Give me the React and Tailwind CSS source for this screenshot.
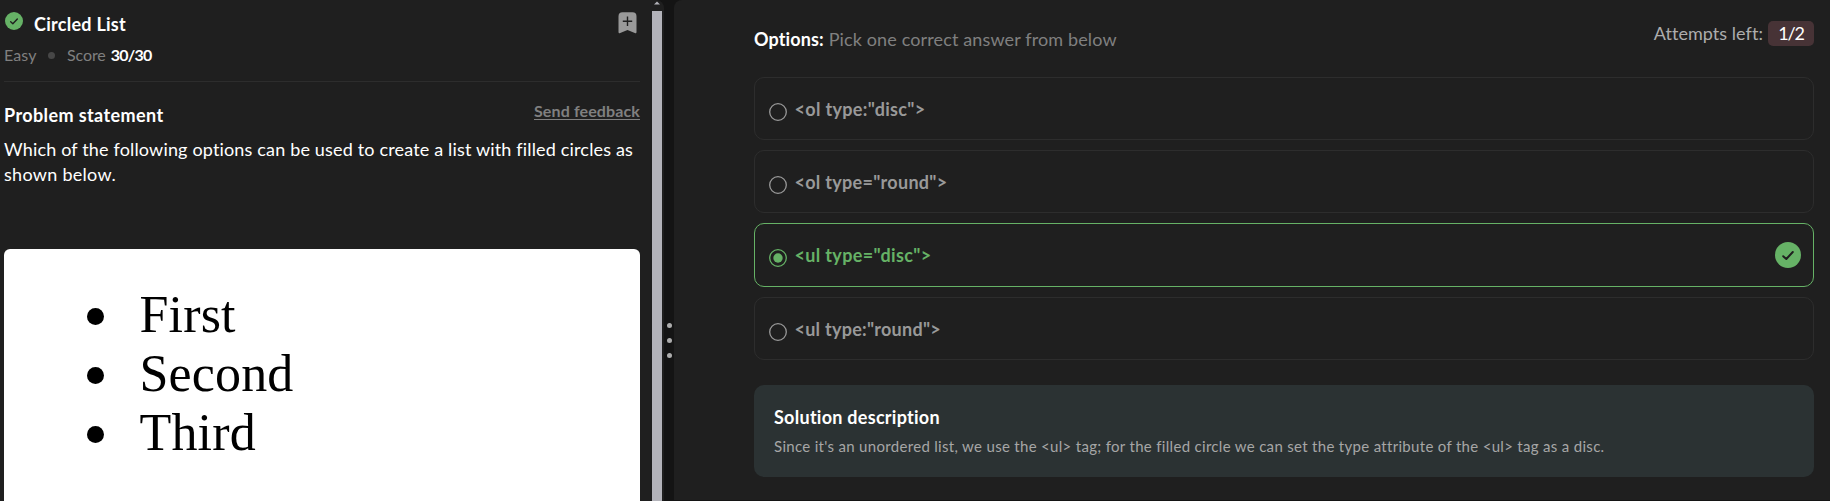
function CheckBadge({ className }) {
  return (
    <svg viewBox="0 0 26 26" className={className} fill="none">
      <circle cx="13" cy="13" r="13" fill="#66b266" />
      <path d="M8.2 14.2 L11.3 17 L17.8 10" stroke="#1f1f1f" strokeWidth="2" strokeLinecap="round" strokeLinejoin="round" />
    </svg>
  );
}

function BookmarkPlus() {
  return (
    <svg viewBox="0 0 19 22" className="h-[22px] w-[19px]">
      <path d="M4.5 0.3 H14.5 Q18.5 0.3 18.5 4.3 V20 Q18.5 21.8 16.8 21.1 L9.5 18 L2.2 21.1 Q0.5 21.8 0.5 20 V4.3 Q0.5 0.3 4.5 0.3 Z" fill="#999999" />
      <path d="M9.5 4.5 V14 M4.8 9.3 H14.2" stroke="#1f1f1f" strokeWidth="1.4" />
    </svg>
  );
}

function Radio({ selected }) {
  return (
    <svg viewBox="0 0 18 18" className={selected ? "size-[18px] text-[#66b266]" : "size-[18px] text-[#999999]"}>
      <circle cx="9" cy="9" r="8.3" fill="none" stroke="currentColor" strokeWidth="1.3" />
      {selected && <circle cx="9" cy="9" r="4.7" fill="currentColor" />}
    </svg>
  );
}

const options = [
  { text: '<ol type:"disc">', tracking: "tracking-[0.32px]" },
  { text: '<ol type="round">', tracking: "tracking-[0.289px]" },
  { text: '<ul type="disc">', tracking: "tracking-[0.345px]", selected: true },
  { text: '<ul type:"round">', tracking: "tracking-[0.259px]" },
];

function Option({ text, tracking, selected }) {
  return (
    <div
      className={
        selected
          ? "flex h-16 items-center rounded-[10px] border border-[#66b266] pr-[12px] pl-[13.5px] text-[#66b266]"
          : "flex h-[63px] items-center rounded-[10px] border border-[#2d2d2d] pr-[12px] pl-[13.5px] text-[#999999]"
      }
    >
      <span className="mt-[6px]">
        <Radio selected={selected} />
      </span>
      <span className={"ml-[8px] text-[18px] leading-6 font-bold " + tracking}>{text}</span>
      {selected && <CheckBadge className="ml-auto size-[26px]" />}
    </div>
  );
}

function ProblemPanel() {
  return (
    <section className="flex w-[664px] shrink-0 rounded-tr-lg bg-[#1f1f1f]">
      <div className="flex w-[640px] flex-col pl-1">
        <header className="flex h-[82px] justify-between border-b border-[#2d2d2d]">
          <div>
            <div className="flex pt-[12px]">
              <CheckBadge className="ml-[1px] size-[18px]" />
              <h1 className="ml-[11px] text-[18px] leading-6 font-bold tracking-[0.264px]">Circled List</h1>
            </div>
            <div className="mt-[7px] flex items-center text-[16px] leading-6 text-[#808080]">
              <span className="tracking-[0.1px]">Easy</span>
              <span className="mr-3 ml-[11.5px] size-[7px] rounded-full bg-[#474747]" />
              <span className="tracking-[-0.1px]">Score</span>
              <b className="ml-[5px] tracking-[-0.716px] text-white">30/30</b>
            </div>
          </div>
          <div className="pt-[12px] pr-[3px]">
            <BookmarkPlus />
          </div>
        </header>
        <div className="mt-[17px] flex justify-between whitespace-nowrap">
          <h2 className="mt-[4px] text-[18px] leading-6 font-bold tracking-[0.393px]">Problem statement</h2>
          <a className="text-[16px] leading-6 font-bold tracking-[0.12px] text-[#808080] underline underline-offset-2">Send feedback</a>
        </div>
        <p className="mt-[10px] text-[18px] leading-[25px] tracking-[0.164px] whitespace-nowrap">
          Which of the following options can be used to create a list with filled circles as
          <br />
          <span className="tracking-[0.283px]">shown below.</span>
        </p>
        <div className="mt-[62px] flex-1 rounded-t-md bg-white pt-[36px] pl-[82.5px] font-['Liberation_Serif',serif] text-[52px] leading-[59px] tracking-[0.15px] text-black">
          <ul>
            {["First", "Second", "Third"].map((item) => (
              <li key={item} className="flex items-center">
                <span className="mt-[3px] mr-[36px] size-[17px] rounded-full bg-black" />
                {item}
              </li>
            ))}
          </ul>
        </div>
      </div>
      <div className="ml-[12px] flex w-[10px] flex-col items-center">
        <svg viewBox="0 0 6 4" className="mt-[1px] mb-[6px] h-1 w-1.5 shrink-0" fill="#b3b3ba">
          <path d="M3 0.5 L6 3.5 H0 Z" />
        </svg>
        <div className="w-full flex-1 bg-[#b3b3ba]" />
      </div>
    </section>
  );
}

export default function App() {
  return (
    <main className="flex h-[501px] w-[1830px] overflow-hidden bg-[#141414] font-['Lato',sans-serif] text-white">
      <ProblemPanel />
      <div className="flex w-[10px] shrink-0 flex-col items-center gap-[10px] pt-[322.5px]">
        <i className="size-[5px] rounded-full bg-[#adadad]" />
        <i className="size-[5px] rounded-full bg-[#adadad]" />
        <i className="size-[5px] rounded-full bg-[#adadad]" />
      </div>
      <section className="h-[500px] flex-1 rounded-tl-lg bg-[#1f1f1f] pr-[16px] pl-[80px]">
        <div className="flex h-[77px] justify-between text-[18px] leading-6">
          <p className="mt-[27px] text-[#808080]">
            <b className="tracking-[0.109px] text-white">Options:</b>
            <span className="ml-[5px] tracking-[0.131px]">Pick one correct answer from below</span>
          </p>
          <p className="mt-[21px] flex h-[25px] items-center text-[#adadad]">
            <span className="mr-[5px] mb-[2px] tracking-[0.05px]">Attempts left:</span>
            <span className="flex h-[25px] w-[46px] items-center justify-center rounded-[5px] bg-[#473336] pb-[1px] tracking-[-1.1px] text-white">1/2</span>
          </p>
        </div>
        <div className="flex flex-col gap-[10px]">
          {options.map((option) => (
            <Option key={option.text} {...option} />
          ))}
        </div>
        <div className="mt-[25px] h-[92px] rounded-[10px] bg-[#2b3233] px-5 pt-[20px]">
          <h2 className="text-[18px] leading-6 font-bold tracking-[0.268px]">Solution description</h2>
          <p className="mt-[5px] text-[15px] leading-6 tracking-[0.312px] whitespace-nowrap text-[#a6a6a6]">
            Since it&apos;s an unordered list, we use the &lt;ul&gt; tag; for the filled circle we can set the type attribute of the &lt;ul&gt; tag as a disc.
          </p>
        </div>
      </section>
    </main>
  );
}
